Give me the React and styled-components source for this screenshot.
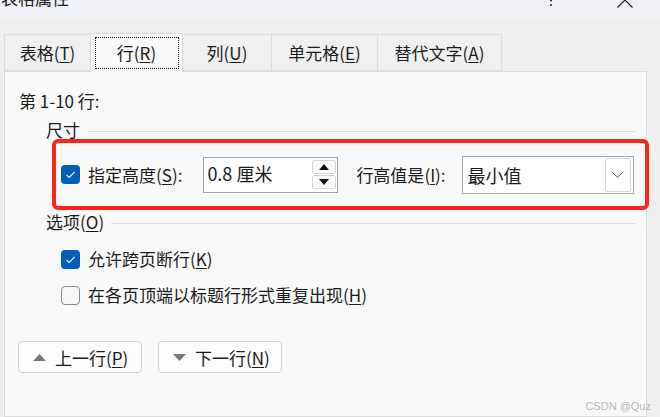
import React from 'react';
import styled, {createGlobalStyle} from 'styled-components';

const GlobalStyle = createGlobalStyle`
  body {
    margin: 0;
    background: #efefef;
    font-family: "Noto Sans CJK SC", "Noto Sans", sans-serif;
    color: #1b1b1b;
    overflow: hidden;
  }
  u { text-underline-offset: 2px; text-decoration-thickness: 1px; }
`;

const tabs = [
	{label: '表格', key: 'T', width: 88},
	{label: '行', key: 'R', width: 93, active: true},
	{label: '列', key: 'U', width: 90},
	{label: '单元格', key: 'E', width: 107},
	{label: '替代文字', key: 'A', width: 125},
];

const Check = ({checked}) => (
	<CheckBox $checked={checked}>
		{checked &&
			<svg width="19" height="19" viewBox="0 0 19 19">
				<path d="M5.5 9.8 L8.2 12.4 L13.6 6.8" fill="none" stroke="#fff" strokeWidth="1.1" />
			</svg>
		}
	</CheckBox>
);

const Mn = ({label, k, tail = ''}) => (
	<>{label}(<u>{k}</u>){tail}</>
);

const App = () => {
	return (
		<Window>
			<GlobalStyle />
			<TitleBar>
				<Title>表格属性</Title>
				<Dots width="4" height="8" viewBox="0 0 4 8">
					<circle cx="2" cy="0.5" r="1.1" fill="#333" />
					<circle cx="2" cy="5" r="1.1" fill="#333" />
				</Dots>
				<Close width="18" height="18" viewBox="0 0 18 18">
					<path d="M1.5 1.5 L16.5 16.5 M16.5 1.5 L1.5 16.5" stroke="#222" strokeWidth="1.2" />
				</Close>
			</TitleBar>

			<TabRow>
				{tabs.map(t => (
					<Tab key={t.key} $width={t.width} $active={t.active}>
						<TabText $active={t.active}><Mn label={t.label} k={t.key} /></TabText>
					</Tab>
				))}
			</TabRow>

			<Panel>
				<RangeLabel>第 1-10 行:</RangeLabel>

				<GroupHeader><span>尺寸</span></GroupHeader>
				<Highlight>
					<Check checked />
					<Label><Mn label="指定高度" k="S" tail=":" /></Label>
					<Spinner>
						<SpinValue>0.8 厘米</SpinValue>
						<SpinButtons>
							<SpinButton>
								<svg width="10" height="6" viewBox="0 0 10 6"><path d="M0 6 L5 0 L10 6 Z" fill="#111" /></svg>
							</SpinButton>
							<SpinButton>
								<svg width="10" height="6" viewBox="0 0 10 6"><path d="M0 0 L5 6 L10 0 Z" fill="#111" /></svg>
							</SpinButton>
						</SpinButtons>
					</Spinner>
					<Label $gap={18}><Mn label="行高值是" k="I" tail=":" /></Label>
					<Select>
						<SelectValue>最小值</SelectValue>
						<SelectButton>
							<svg width="11" height="6" viewBox="0 0 11 6">
								<path d="M0.5 0.5 L5.5 5.3 L10.5 0.5" fill="none" stroke="#555" strokeWidth="1" />
							</svg>
						</SelectButton>
					</Select>
				</Highlight>

				<GroupHeader $top={2}><span><Mn label="选项" k="O" /></span></GroupHeader>
				<Options>
					<OptionRow>
						<Check checked />
						<Label><Mn label="允许跨页断行" k="K" /></Label>
					</OptionRow>
					<OptionRow>
						<Check />
						<Label><Mn label="在各页顶端以标题行形式重复出现" k="H" /></Label>
					</OptionRow>
				</Options>

				<ButtonRow>
					<NavButton>
						<svg width="13" height="7" viewBox="0 0 13 7"><path d="M0 7 L6.5 0 L13 7 Z" fill="#787878" /></svg>
						<span><Mn label="上一行" k="P" /></span>
					</NavButton>
					<NavButton>
						<svg width="13" height="7" viewBox="0 0 13 7"><path d="M0 0 L6.5 7 L13 0 Z" fill="#787878" /></svg>
						<span><Mn label="下一行" k="N" /></span>
					</NavButton>
				</ButtonRow>
			</Panel>

			<Watermark>CSDN @Quz</Watermark>
		</Window>
	);
};

export default App;

const Window = styled.div`
  position: relative;
  width: 660px;
  height: 417px;
  overflow: hidden;
  background: #efefef;
  display: flex;
  flex-direction: column;
`;

const TitleBar = styled.div`
  height: 20px;
  flex-shrink: 0;
  background: #eff1f6;
  display: flex;
  align-items: flex-start;
  overflow: hidden;
`;

const Title = styled.div`
  font-size: 17px;
  line-height: 20px;
  margin-top: -12px;
  padding-left: 1px;
  flex: 1;
`;

const Dots = styled.svg`
  margin-top: 0;
  margin-right: 63px;
`;

const Close = styled.svg`
  margin-top: -9px;
  margin-right: 26px;
`;

const TabRow = styled.div`
  display: flex;
  align-items: flex-end;
  padding-left: 4px;
  margin-top: 13px;
  height: 38px;
  position: relative;
  z-index: 1;
`;

const Tab = styled.div`
  width: ${p => p.$width}px;
  height: ${p => (p.$active ? 39 : 37)}px;
  box-sizing: border-box;
  display: flex;
  align-items: center;
  justify-content: center;
  background: ${p => (p.$active ? '#f9f9f9' : '#f0f0f0')};
  border: 1px solid #dcdcdc;
  border-bottom: ${p => (p.$active ? 'none' : '1px solid #dcdcdc')};
  margin-left: -1px;
  margin-bottom: ${p => (p.$active ? -1 : 0)}px;
  font-size: 17px;
  &:first-child { margin-left: 0; width: ${p => p.$width - 1}px; }
`;

const TabText = styled.span`
  padding: 3px 7px;
  line-height: 24px;
  border: 1px dotted ${p => (p.$active ? '#111' : 'transparent')};
  ${p => p.$active && 'width: 84px; box-sizing: border-box; text-align: center; height: 32px; display: flex; align-items: center; justify-content: center;'}
`;

const Panel = styled.div`
  flex: 1;
  margin: 0 13px 0 4px;
  border: 1px solid #dcdcdc;
  background: #f9f9f9;
  padding: 17px 0 0 14px;
  display: flex;
  flex-direction: column;
  font-size: 17px;
`;

const RangeLabel = styled.div`
  line-height: 24px;
`;

const GroupHeader = styled.div`
  display: flex;
  align-items: center;
  height: 20px;
  margin: ${p => p.$top ?? 7}px 11px 0 27px;
  line-height: 20px;
  &::after {
    content: '';
    flex: 1;
    height: 1px;
    background: #dddddd;
    margin-left: 7px;
    margin-top: 2px;
  }
`;

const Highlight = styled.div`
  display: flex;
  align-items: center;
  height: 71px;
  box-sizing: border-box;
  margin: -1px -3px 0 33px;
  padding-left: 5px;
  border: 4px solid #ff2418;
  border-radius: 6px;
`;

const CheckBox = styled.span`
  width: 19px;
  height: 19px;
  box-sizing: border-box;
  flex-shrink: 0;
  border-radius: 4px;
  display: inline-flex;
  background: ${p => (p.$checked ? '#005fb8' : '#f6f6f6')};
  border: ${p => (p.$checked ? 'none' : '1px solid #8a8a8a')};
`;

const Label = styled.span`
  margin-left: ${p => p.$gap ?? 8}px;
  white-space: nowrap;
  line-height: 24px;
`;

const Spinner = styled.div`
  margin-left: 21px;
  width: 135px;
  height: 36px;
  box-sizing: border-box;
  border: 1px solid #a3a3a3;
  background: #fff;
  display: flex;
  align-items: center;
  padding: 0 1px 0 3px;
`;

const SpinValue = styled.span`
  flex: 1;
  font-size: 18px;
  margin-top: -3px;
`;

const SpinButtons = styled.div`
  display: flex;
  flex-direction: column;
  gap: 1px;
`;

const SpinButton = styled.div`
  width: 24px;
  height: 14px;
  box-sizing: border-box;
  border: 1px solid #d6d6d6;
  border-radius: 2px;
  background: #fbfbfb;
  display: flex;
  align-items: center;
  justify-content: center;
`;

const Select = styled.div`
  margin-left: 16px;
  width: 172px;
  height: 38px;
  box-sizing: border-box;
  border: 1px solid #a8a8a8;
  background: #fff;
  display: flex;
  align-items: center;
  padding: 0 2px 0 5px;
`;

const SelectValue = styled.span`
  flex: 1;
  font-size: 18px;
`;

const SelectButton = styled.div`
  width: 26px;
  height: 34px;
  box-sizing: border-box;
  border: 1px solid #d8d8d8;
  border-radius: 2px;
  display: flex;
  align-items: center;
  justify-content: center;
`;

const Options = styled.div`
  display: flex;
  flex-direction: column;
  margin: 9px 0 0 42px;
`;

const OptionRow = styled.div`
  display: flex;
  align-items: center;
  height: 36px;
`;

const ButtonRow = styled.div`
  display: flex;
  gap: 16px;
  margin: 28px 0 0 -1px;
`;

const NavButton = styled.div`
  width: 124px;
  height: 32px;
  box-sizing: border-box;
  border: 1px solid #d3d3d3;
  border-radius: 4px;
  background: #fdfdfd;
  display: flex;
  align-items: center;
  gap: 9px;
  padding-left: 14px;
  svg { flex-shrink: 0; }
`;

const Watermark = styled.div`
  position: absolute;
  right: 9px;
  bottom: 5px;
  font-family: "Liberation Sans", sans-serif;
  font-size: 11px;
  color: #b8b8b8;
`;
